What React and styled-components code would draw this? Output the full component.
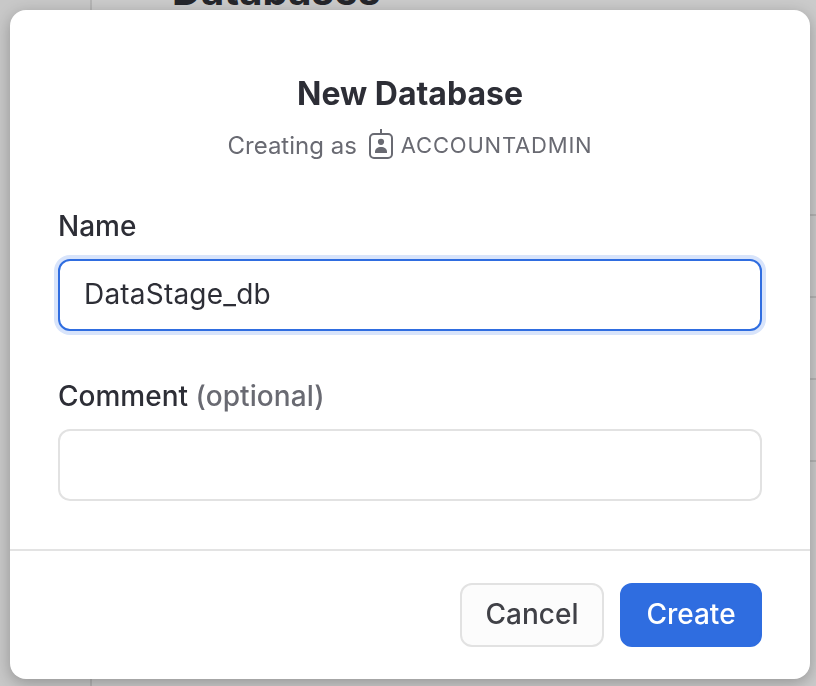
import React from "react";
import styled, { createGlobalStyle } from "styled-components";

const GlobalStyle = createGlobalStyle`
  * { box-sizing: border-box; }
  body {
    margin: 0;
    overflow: hidden;
    background: #cbcbcb;
    font-family: Inter, "Liberation Sans", sans-serif;
    color: #2d2e36;
  }
`;

const Page = styled.div`
  display: flex;
  height: 686px;
  overflow: hidden;
`;

const Sidebar = styled.aside`
  flex: 0 0 92px;
  background: #c8c8c8;
  border-right: 2px solid #b5b5b5;
`;

const Content = styled.main`
  flex: 1;
`;

const PageTitle = styled.h1`
  margin: -32px 0 0 80px;
  height: 46px;
  font-size: 40px;
  line-height: 46px;
  font-weight: 700;
  letter-spacing: 0.1px;
  color: #25262b;
`;

const TableRows = styled.div`
  margin-top: 200px;
`;

const TableRow = styled.div`
  height: 82px;
  border-top: 2px solid #b4b4b4;
`;

const Overlay = styled.div`
  position: fixed;
  inset: 0;
  padding: 10px 6px 7px 10px;
`;

const Dialog = styled.form`
  display: flex;
  flex-direction: column;
  height: 669px;
  border-radius: 16px;
  background: #fff;
  box-shadow: 0 4px 16px rgba(0, 0, 0, 0.27);
`;

const Header = styled.header`
  display: flex;
  flex-direction: column;
  align-items: center;
  padding-top: 64px;
`;

const Title = styled.h2`
  margin: 0;
  font-size: 32px;
  line-height: 40px;
  font-weight: 700;
`;

const Subtitle = styled.div`
  display: flex;
  align-items: center;
  height: 32px;
  margin-top: 15px;
  color: #696a72;
  font-size: 24px;
  line-height: 32px;
`;

const SubtitleText = styled.span`
  padding-top: 2px;
`;

const RoleIcon = styled.svg`
  width: 26px;
  height: 32px;
  margin: 0 7px 0 11px;
`;

const Role = styled.span`
  font-size: 22px;
  letter-spacing: 0.8px;
`;

const Fields = styled.div`
  display: flex;
  flex-direction: column;
  gap: 48px;
  padding: 48px;
`;

const Field = styled.label`
  display: flex;
  flex-direction: column;
  gap: 16px;
`;

const Label = styled.span`
  font-size: 28px;
  line-height: 34px;
  font-weight: 500;
`;

const Optional = styled.span`
  color: #696a72;
  letter-spacing: 0.1px;
`;

const Input = styled.input`
  width: 100%;
  height: 72px;
  padding: 0 24px 2px;
  border: 2px solid ${(p) => (p.$active ? "#2f6de0" : "#e2e2e2")};
  border-radius: 12px;
  outline: none;
  background: #fff;
  box-shadow: ${(p) => (p.$active ? "0 0 0 4px #d8e4fb" : "none")};
  color: #2d2e36;
  font: 400 28px/40px Inter, "Liberation Sans", sans-serif;
  letter-spacing: 0.2px;
`;

const Footer = styled.footer`
  display: flex;
  justify-content: flex-end;
  gap: 16px;
  padding: 32px 48px;
  border-top: 2px solid #e3e3e3;
`;

const Button = styled.button`
  width: ${(p) => (p.$primary ? "142px" : "144px")};
  height: 64px;
  padding: 0 0 2px;
  border: 2px solid ${(p) => (p.$primary ? "#2f6de0" : "#e2e2e2")};
  border-radius: 12px;
  background: ${(p) => (p.$primary ? "#2f6de0" : "#fcfcfc")};
  color: ${(p) => (p.$primary ? "#fff" : "#404147")};
  font: 500 28px/40px Inter, "Liberation Sans", sans-serif;
`;

function BadgeIcon() {
  return (
    <RoleIcon viewBox="0 0 26 32" fill="none" aria-hidden="true">
      <path d="M13 0v5" stroke="#696a72" strokeWidth="2" />
      <rect x="2" y="5" width="22" height="24" rx="4" stroke="#696a72" strokeWidth="2" />
      <circle cx="13" cy="12.8" r="3.1" fill="#696a72" />
      <path d="M7 24v-1c0-3.3 2.5-5 6-5s6 1.7 6 5v1z" fill="#696a72" />
    </RoleIcon>
  );
}

export default function App() {
  return (
    <>
      <GlobalStyle />
      <Page>
        <Sidebar />
        <Content>
          <PageTitle>Databases</PageTitle>
          <TableRows>
            <TableRow />
            <TableRow />
            <TableRow />
            <TableRow />
          </TableRows>
        </Content>
      </Page>
      <Overlay>
        <Dialog role="dialog" aria-label="New Database">
          <Header>
            <Title>New Database</Title>
            <Subtitle>
              <SubtitleText>Creating as</SubtitleText>
              <BadgeIcon />
              <Role>ACCOUNTADMIN</Role>
            </Subtitle>
          </Header>
          <Fields>
            <Field>
              <Label>Name</Label>
              <Input $active defaultValue="DataStage_db" />
            </Field>
            <Field>
              <Label>
                Comment <Optional>(optional)</Optional>
              </Label>
              <Input />
            </Field>
          </Fields>
          <Footer>
            <Button type="button">Cancel</Button>
            <Button type="button" $primary>Create</Button>
          </Footer>
        </Dialog>
      </Overlay>
    </>
  );
}
